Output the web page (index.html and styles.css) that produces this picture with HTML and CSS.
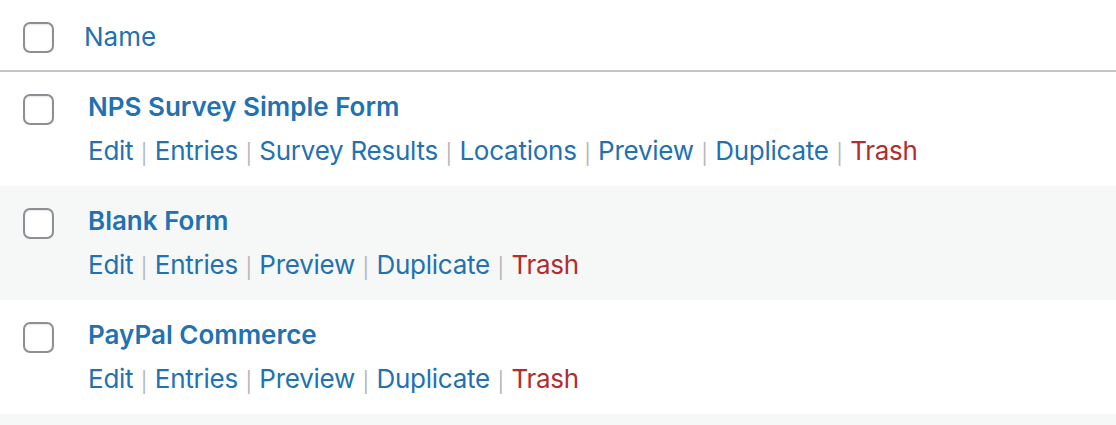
FILE: index.html
```html
<!DOCTYPE html>
<html lang="en">

<head>
    <meta charset="UTF-8" />
    <meta name="viewport" content="width=device-width, initial-scale=1.0" />
    <title>Forms</title>
    <link rel="stylesheet" href="styles.css">
</head>

<body>
    <div class="forms-table">
        <!-- Başlık -->
        <div class="head-row">
            <div class="check-cell"><span class="checkbox"></span></div>
            <a class="column-name" href="#">Name</a>
        </div>

        <div class="form-row">
            <div class="check-cell"><span class="checkbox"></span></div>
            <div class="name-cell">
                <a class="row-title" href="#">NPS Survey Simple Form</a>
                <div class="row-actions">
                    <a href="#">Edit</a><span class="sep">|</span>
                    <a href="#">Entries</a><span class="sep">|</span>
                    <a href="#">Survey Results</a><span class="sep">|</span>
                    <a href="#">Locations</a><span class="sep">|</span>
                    <a href="#">Preview</a><span class="sep">|</span>
                    <a href="#">Duplicate</a><span class="sep">|</span>
                    <a class="trash" href="#">Trash</a>
                </div>
            </div>
        </div>

        <div class="form-row alt">
            <div class="check-cell"><span class="checkbox"></span></div>
            <div class="name-cell">
                <a class="row-title" href="#">Blank Form</a>
                <div class="row-actions">
                    <a href="#">Edit</a><span class="sep">|</span>
                    <a href="#">Entries</a><span class="sep">|</span>
                    <a href="#">Preview</a><span class="sep">|</span>
                    <a href="#">Duplicate</a><span class="sep">|</span>
                    <a class="trash" href="#">Trash</a>
                </div>
            </div>
        </div>

        <div class="form-row">
            <div class="check-cell"><span class="checkbox"></span></div>
            <div class="name-cell">
                <a class="row-title" href="#">PayPal Commerce</a>
                <div class="row-actions">
                    <a href="#">Edit</a><span class="sep">|</span>
                    <a href="#">Entries</a><span class="sep">|</span>
                    <a href="#">Preview</a><span class="sep">|</span>
                    <a href="#">Duplicate</a><span class="sep">|</span>
                    <a class="trash" href="#">Trash</a>
                </div>
            </div>
        </div>

        <div class="form-row alt last"></div>
    </div>
</body>

</html>
```

FILE: styles.css
```css
body {
    margin: 0;
    background: #fff;
    font-family: Inter, 'Noto Sans', sans-serif;
    font-size: 26px;
    color: #2271b1;
    overflow: hidden;
}

a {
    color: #2271b1;
    text-decoration: none;
}

.forms-table {
    display: flex;
    flex-direction: column;
}

.head-row {
    display: flex;
    height: 70px;
    border-bottom: 2px solid #c3c4c7;
}

.check-cell {
    width: 84px;
    flex-shrink: 0;
    padding: 22px 0 0 23px;
    box-sizing: border-box;
}

.form-row .check-cell {
    width: 88px;
}

.checkbox {
    display: block;
    width: 31px;
    height: 31px;
    box-sizing: border-box;
    border: 2px solid #8c8f94;
    border-radius: 7px;
    background: #fff;
    box-shadow: inset 0 1px 2px rgba(0, 0, 0, 0.1);
}

.column-name {
    padding-top: 19px;
    line-height: 36px;
}

.form-row {
    display: flex;
    height: 114px;
    background: #fff;
}

.form-row.alt {
    background: #f6f7f7;
}

.form-row.last {
    height: 11px;
}

.name-cell {
    padding-top: 17px;
    display: flex;
    flex-direction: column;
}

.row-title {
    font-weight: 600;
    line-height: 36px;
}

.row-actions {
    margin-top: 8px;
    line-height: 36px;
    display: flex;
    align-items: baseline;
    gap: 7.5px;
    letter-spacing: -0.25px;
}

.sep {
    color: #b4b6b9;
    font-size: 20px;
    position: relative;
    top: 1px;
}

.trash {
    color: #b32d2e;
}
```
